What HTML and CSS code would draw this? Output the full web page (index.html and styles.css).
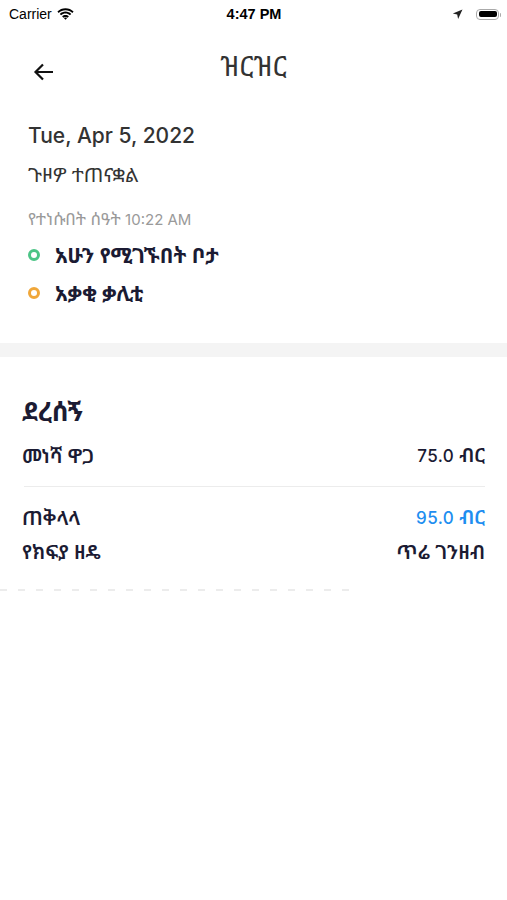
FILE: index.html
```html
<!DOCTYPE html>
<html lang="am">
<head>
    <meta charset="UTF-8">
    <meta name="viewport" content="width=device-width, initial-scale=1.0">
    <title>ዝርዝር</title>
    <link rel="stylesheet" href="styles.css">
</head>
<body>
    <div class="status-bar">
        <div class="status-left">
            <span>Carrier</span>
            <svg class="wifi" width="17" height="12" viewBox="0 0 17 12">
                <path d="M8.5 2.2c2.6 0 5 1 6.8 2.7l1.3-1.4C14.5 1.4 11.6.2 8.5.2S2.5 1.4.4 3.5l1.3 1.4C3.5 3.2 5.9 2.2 8.5 2.2z" fill="#000"/>
                <path d="M8.5 5.6c1.7 0 3.2.6 4.4 1.7l1.3-1.4C12.7 4.5 10.7 3.6 8.5 3.6S4.3 4.5 2.8 5.9l1.3 1.4c1.2-1.1 2.7-1.7 4.4-1.7z" fill="#000"/>
                <path d="M8.5 8.9c.8 0 1.5.3 2.1.8l1.3-1.4c-.9-.8-2.1-1.3-3.4-1.3s-2.5.5-3.4 1.3l1.3 1.4c.6-.5 1.3-.8 2.1-.8zM8.5 11.8l1.5-1.6c-.4-.4-.9-.6-1.5-.6s-1.1.2-1.5.6z" fill="#000"/>
            </svg>
        </div>
        <div class="status-time">4:47 PM</div>
        <div class="status-right">
            <svg width="11" height="11" viewBox="0 0 11 11">
                <path d="M10.5.5L.8 4.6l4.4.9.9 4.4z" fill="#222"/>
            </svg>
            <div class="battery"><div class="battery-fill"></div></div>
        </div>
    </div>

    <header class="nav">
        <svg class="back" width="24" height="24" viewBox="0 0 24 24">
            <path d="M21 12H4M11 4.5L3.5 12l7.5 7.5" fill="none" stroke="#111" stroke-width="2.2"/>
        </svg>
        <h1 class="nav-title">ዝርዝር</h1>
    </header>

    <section class="trip">
        <div class="trip-date">Tue, Apr 5, 2022</div>
        <div class="trip-status">ጉዞዎ ተጠናቋል</div>
        <div class="trip-time">የተነሱበት ሰዓት <span class="latin">10:22 AM</span></div>
        <div class="place">
            <span class="dot green"></span>
            <span>አሁን የሚገኙበት ቦታ</span>
        </div>
        <div class="place place-end">
            <span class="dot orange"></span>
            <span>አቃቂ ቃሊቲ</span>
        </div>
    </section>

    <div class="band"></div>

    <section class="receipt">
        <h2 class="receipt-title">ደረሰኝ</h2>
        <div class="row">
            <span>መነሻ ዋጋ</span>
            <span><span class="latin">75.0</span> ብር</span>
        </div>
        <hr class="divider">
        <div class="row">
            <span>ጠቅላላ</span>
            <span class="total"><span class="latin">95.0</span> ብር</span>
        </div>
        <div class="row row-last">
            <span>የክፍያ ዘዴ</span>
            <span>ጥሬ ገንዘብ</span>
        </div>
    </section>

    <div class="dashed"></div>
</body>
</html>
```

FILE: styles.css
```css
body {
    margin: 0;
    background: #fff;
    font-family: "Noto Sans Ethiopic", "Abyssinica SIL", "Noto Sans", "DejaVu Sans", sans-serif;
    color: #1b1b33;
}
.latin {
    font-family: "Inter", "Open Sans", sans-serif;
}
.status-bar {
    height: 28px;
    display: flex;
    align-items: center;
    justify-content: space-between;
    padding: 0 8px 0 9px;
    font-family: "Liberation Sans", Arial, sans-serif;
    font-size: 14px;
    color: #000;
}
.status-left {
    display: flex;
    align-items: center;
    gap: 5px;
    width: 120px;
}
.status-time {
    font-weight: 600;
    font-size: 14.5px;
}
.status-right {
    display: flex;
    align-items: center;
    justify-content: flex-end;
    gap: 13px;
    width: 120px;
}
.battery {
    width: 23px;
    height: 11px;
    border: 1px solid #aaa;
    border-radius: 4px;
    padding: 1.5px;
    box-sizing: border-box;
    position: relative;
}
.battery::after {
    content: "";
    position: absolute;
    right: -3px;
    top: 3px;
    width: 1.5px;
    height: 4px;
    background: #aaa;
    border-radius: 0 1px 1px 0;
}
.battery-fill {
    width: 100%;
    height: 100%;
    background: #000;
    border-radius: 2px;
}
.nav {
    position: relative;
    height: 72px;
    box-sizing: border-box;
    padding-top: 19px;
    text-align: center;
}
.back {
    position: absolute;
    left: 32px;
    top: 32px;
}
.nav-title {
    margin: 0;
    font-size: 28px;
    font-weight: normal;
    line-height: 36px;
    color: #333;
}
.trip {
    padding: 22px 28px 35px;
}
.trip-date {
    font-family: "Inter", "Open Sans", sans-serif;
    font-size: 21px;
    font-weight: 500;
    color: #333;
    line-height: 28px;
}
.trip-status {
    margin-top: 11px;
    font-size: 20px;
    color: #333;
    line-height: 28px;
}
.trip-time {
    margin-top: 19px;
    font-size: 17px;
    color: #9a9a9a;
    line-height: 22px;
}
.trip-time .latin {
    font-size: 15px;
}
.place {
    display: flex;
    align-items: center;
    gap: 15px;
    font-size: 21px;
    font-weight: bold;
    line-height: 30px;
    margin-top: 9px;
}
.place-end {
    margin-top: 8px;
}
.dot {
    width: 6px;
    height: 6px;
    border-radius: 50%;
    border: 3px solid;
    flex: none;
}
.green {
    border-color: #4cc486;
}
.orange {
    border-color: #f0a73a;
}
.band {
    height: 14px;
    background: #f4f4f4;
}
.receipt {
    padding: 37px 22px 22px;
}
.receipt-title {
    margin: 0 0 12px;
    font-size: 26px;
    font-weight: bold;
    line-height: 34px;
}
.row {
    display: flex;
    justify-content: space-between;
    align-items: center;
    font-size: 20px;
    font-weight: 600;
    line-height: 30px;
}
.row .latin {
    font-size: 17px;
    font-weight: 500;
    letter-spacing: 0.4px;
}
.row-last {
    margin-top: 4px;
}
.total {
    color: #1e8ef0;
}
.divider {
    border: 0;
    border-top: 1px solid #ececec;
    margin: 15px 0 15px 2px;
}
.dashed {
    width: 358px;
    height: 2px;
    background: repeating-linear-gradient(to right, #ececec 0 7px, transparent 7px 18px);
}
```
